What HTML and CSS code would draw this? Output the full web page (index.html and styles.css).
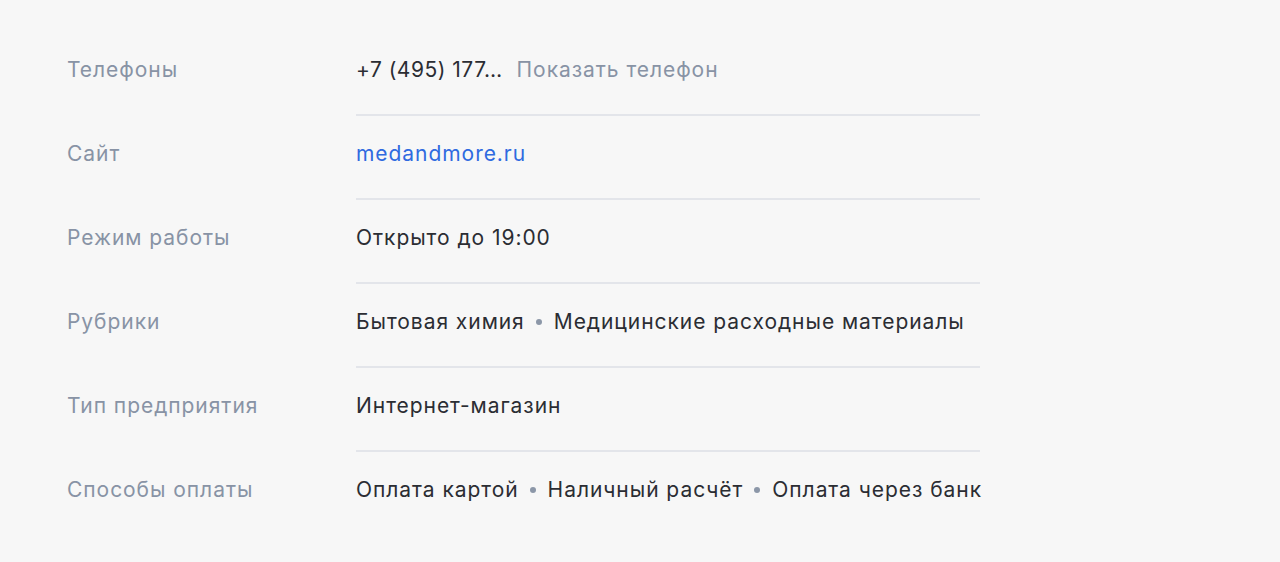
FILE: index.html
```html
<!DOCTYPE html>
<html lang="ru">
<head>
<meta charset="utf-8">
<link rel="stylesheet" href="styles.css">
</head>
<body>
<div class="info">
  <div class="row">
    <div class="label">Телефоны</div>
    <div class="value"><span class="phone">+7 (495) 177…</span><span class="show">Показать телефон</span></div>
  </div>
  <div class="row">
    <div class="label">Сайт</div>
    <div class="value"><a class="link" href="#">medandmore.ru</a></div>
  </div>
  <div class="row">
    <div class="label">Режим работы</div>
    <div class="value">Открыто до 19:00</div>
  </div>
  <div class="row">
    <div class="label">Рубрики</div>
    <div class="value">Бытовая химия<span class="dot"></span>Медицинские расходные материалы</div>
  </div>
  <div class="row">
    <div class="label">Тип предприятия</div>
    <div class="value">Интернет-магазин</div>
  </div>
  <div class="row last">
    <div class="label">Способы оплаты</div>
    <div class="value">Оплата картой<span class="dot"></span>Наличный расчёт<span class="dot"></span>Оплата через банк</div>
  </div>
</div>
</body>
</html>
```
FILE: styles.css
```css
html, body {
  margin: 0;
  padding: 0;
  background: #f7f7f7;
}
body {
  font-family: Inter, "Noto Sans", sans-serif;
  font-size: 21px;
  letter-spacing: 0.95px;
  line-height: 24px;
  color: #2b2d33;
  height: 562px;
}
.info {
  padding: 58px 0 0 67px;
}
.row {
  display: flex;
}
.label {
  width: 289px;
  flex: none;
  color: #8893a5;
}
.value {
  width: 624px;
  padding: 0 0 32px;
  margin-bottom: 27px;
  border-bottom: 2px solid #e3e5ea;
  display: flex;
  align-items: center;
  white-space: nowrap;
}
.row:not(:first-child) .label,
.row:not(:first-child) .value {
  margin-top: -1px;
}
.row.last .value {
  border-bottom: none;
}
.phone {
  letter-spacing: 0.5px;
}
.show {
  color: #8893a5;
  margin-left: 14px;
}
.link {
  color: #2f6ae0;
  text-decoration: none;
}
.dot {
  width: 6px;
  height: 6px;
  border-radius: 50%;
  background: #8c97a8;
  margin: 0 12px 0 11px;
  display: inline-block;
  flex: none;
}
```
